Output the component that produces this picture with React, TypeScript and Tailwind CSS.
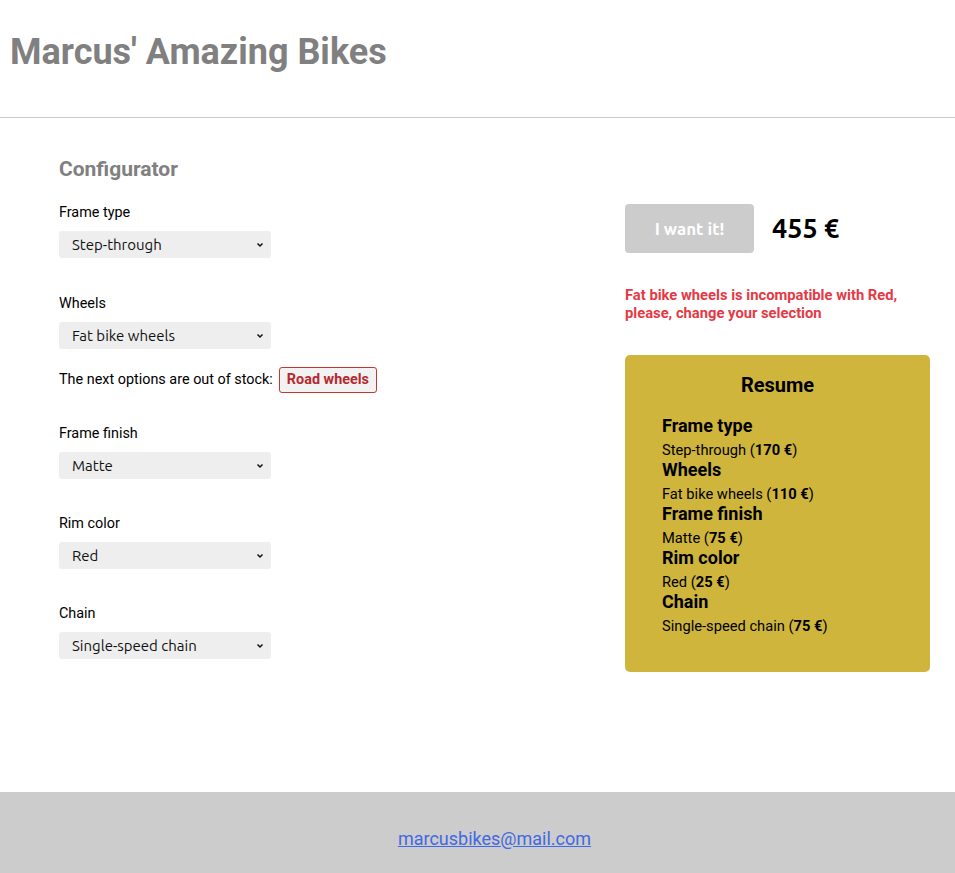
import React from 'react';

const roboto = { fontFamily: 'Roboto, "Liberation Sans", sans-serif' };
const ubuntu = { fontFamily: 'Ubuntu, "Noto Sans", sans-serif' };

interface Option {
  label: string;
  value: string;
  price: number;
}

const parts: Option[] = [
  { label: 'Frame type', value: 'Step-through', price: 170 },
  { label: 'Wheels', value: 'Fat bike wheels', price: 110 },
  { label: 'Frame finish', value: 'Matte', price: 75 },
  { label: 'Rim color', value: 'Red', price: 25 },
  { label: 'Chain', value: 'Single-speed chain', price: 75 },
];

function Chevron() {
  return (
    <svg width="10" height="10" viewBox="0 0 10 10" className="absolute right-[6px] top-[9px]">
      <path d="M2.5 3.5 L5 6 L7.5 3.5" fill="none" stroke="#111" strokeWidth="1.5" />
    </svg>
  );
}

function Field({ part }: { part: Option }) {
  return (
    <div className="flex flex-col">
      <label className="text-[14.4px] leading-[18px] text-black">{part.label}</label>
      <div className="relative mt-[9px] h-[27px] w-[212px] rounded-[3px] bg-[#eeeeee]">
        <span className="absolute left-[13px] top-[4px] text-[15px] leading-[19px] text-[#111]" style={ubuntu}>
          {part.value}
        </span>
        <Chevron />
      </div>
    </div>
  );
}

export default function App() {
  const total = parts.reduce((s, p) => s + p.price, 0);
  return (
    <div className="flex min-h-screen flex-col bg-white" style={roboto}>
      <header className="h-[118px] border-b border-[#cccccc] pl-[10px] pt-[30px]">
        <h1 className="text-[36px] font-bold leading-[45px] text-[#808080]">Marcus' Amazing Bikes</h1>
      </header>

      <main className="flex flex-1 justify-between pl-[59px] pr-[25px] pt-[38px]">
        <section className="flex flex-col">
          <h2 className="text-[21px] font-bold leading-[26px] text-[#808080]">Configurator</h2>
          <div className="mt-[22px] flex flex-col">
            <Field part={parts[0]} />
            <div className="mt-[37px]">
              <Field part={parts[1]} />
            </div>
            <div className="mt-[18px] flex items-center gap-[6px] text-[14.4px]">
              <span>The next options are out of stock:</span>
              <span className="rounded-[3px] border border-[#c0392b] bg-[#f2f2f2] px-[7px] py-[1px] font-bold text-[#b7282e]">
                Road wheels
              </span>
            </div>
            <div className="mt-[32px]">
              <Field part={parts[2]} />
            </div>
            <div className="mt-[36px]">
              <Field part={parts[3]} />
            </div>
            <div className="mt-[36px]">
              <Field part={parts[4]} />
            </div>
          </div>
        </section>

        <aside className="flex w-[305px] flex-col pt-[48px]">
          <div className="flex items-center gap-[18px]">
            <button
              disabled
              className="h-[49px] w-[129px] rounded-[4px] bg-[#cccccc] text-[17px] font-bold text-white"
              style={ubuntu}
            >
              I want it!
            </button>
            <span className="text-[27px] font-bold text-black" style={ubuntu}>
              {total} €
            </span>
          </div>
          <p className="mt-[33px] text-[14.75px] font-bold leading-[18px] text-[#e53945]">
            Fat bike wheels is incompatible with Red,
            <br />
            please, change your selection
          </p>
          <div className="mt-[33px] h-[317px] rounded-[5px] bg-[#cfb53b] pl-[37px] pt-[18px]">
            <h3 className="pr-[37px] text-center text-[20px] font-bold leading-[24px] text-black">Resume</h3>
            <ul className="mt-[18px] flex flex-col">
              {parts.map((p) => (
                <li key={p.label} className="flex flex-col">
                  <span className="text-[18px] font-bold leading-[22px] text-black">{p.label}</span>
                  <span className="pt-[4px] text-[14.7px] leading-[18px] text-black">
                    {p.value} (<b>{p.price} €</b>)
                  </span>
                </li>
              ))}
            </ul>
          </div>
        </aside>
      </main>

      <footer className="flex h-[81px] items-center justify-center bg-[#cccccc] pl-[34px] pt-[12px]">
        <a href="#" className="text-[18px] text-[#4169e1] underline">
          marcusbikes@mail.com
        </a>
      </footer>
    </div>
  );
}
